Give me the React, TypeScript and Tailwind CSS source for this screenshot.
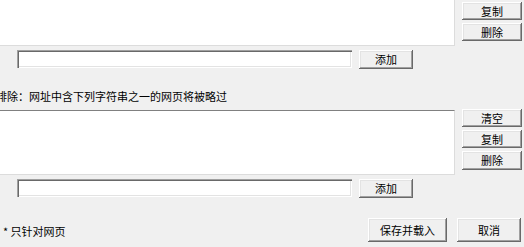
import React from "react";

const font = { fontFamily: '"Noto Sans CJK SC", "Noto Sans", sans-serif' };

function Btn({ children, className = "" }: { children: React.ReactNode; className?: string }) {
  return (
    <div
      className={
        "flex items-center justify-center bg-[#f0f0f0] text-[11px] leading-none text-black shadow-[inset_-1px_-1px_#696969,inset_1px_1px_#ffffff,inset_-2px_-2px_#a0a0a0,inset_2px_2px_#e3e3e3] " +
        className
      }
    >
      {children}
    </div>
  );
}

function Input() {
  return (
    <div className="h-[18px] w-[335px] bg-white shadow-[inset_1px_1px_#a0a0a0,inset_2px_2px_#696969,inset_-1px_-1px_#ffffff,inset_-2px_-2px_#e3e3e3]" />
  );
}

export default function App() {
  return (
    <div className="relative flex h-[247px] w-[524px] flex-col overflow-hidden bg-[#f0f0f0]" style={font}>
      {/* list 1 */}
      <div className="flex h-[46px]">
        <div className="h-[46px] w-[455px] border-b border-r border-[#dcdcdc] bg-white" />
        <div className="ml-[7px] flex w-[60px] flex-col gap-[3px] pt-[2px]">
          <Btn className="h-[18px]">复制</Btn>
          <Btn className="h-[18px]">删除</Btn>
        </div>
      </div>
      {/* input 1 */}
      <div className="mt-[4px] flex h-[19px] items-start pl-[17px]">
        <Input />
        <Btn className="ml-[7px] h-[19px] w-[54px]">添加</Btn>
      </div>
      {/* label */}
      <div className="ml-[-4px] mt-[20px] h-[16px] whitespace-nowrap text-[11px] leading-[14px] text-black">
        排除：网址中含下列字符串之一的网页将被略过
      </div>
      {/* list 2 */}
      <div className="mt-[5px] flex h-[65px]">
        <div className="h-[65px] w-[455px] border-t border-r border-b border-t-[#808080] border-r-[#dcdcdc] border-b-[#dcdcdc] bg-white" />
        <div className="ml-[7px] mt-[-1px] flex w-[60px] flex-col gap-[3px]">
          <Btn className="h-[18px]">清空</Btn>
          <Btn className="h-[18px]">复制</Btn>
          <Btn className="h-[19px]">删除</Btn>
        </div>
      </div>
      {/* input 2 */}
      <div className="mt-[4px] flex h-[19px] items-start pl-[17px]">
        <Input />
        <Btn className="ml-[7px] h-[19px] w-[54px]">添加</Btn>
      </div>
      {/* footer */}
      <div className="mt-[20px] flex h-[24px] items-start">
        <div className="ml-[3px] mt-[6px] whitespace-nowrap text-[11px] leading-[14px] text-black">* 只针对网页</div>
        <div className="flex-1" />
        <Btn className="h-[24px] w-[79px]">保存并载入</Btn>
        <Btn className="ml-[10px] mr-[3px] h-[24px] w-[64px]">取消</Btn>
      </div>
    </div>
  );
}
